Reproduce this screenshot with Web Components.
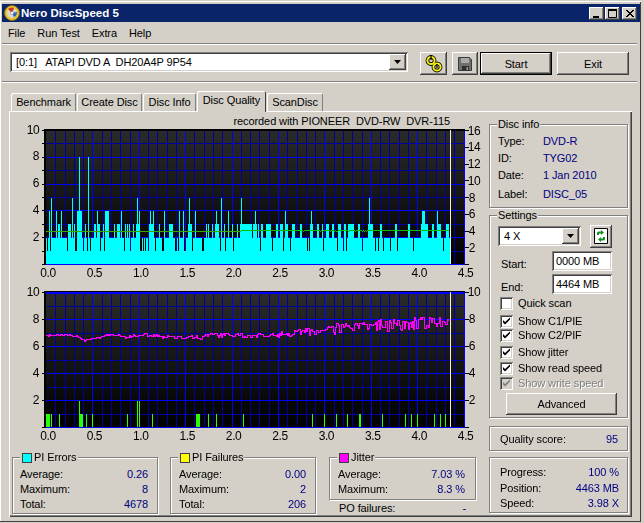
<!DOCTYPE html>
<html><head><meta charset="utf-8"><title>Nero DiscSpeed 5</title>
<style>
html,body{margin:0;padding:0;background:#d4d0c8;overflow:hidden;font:11px "Liberation Sans",Arial,sans-serif;letter-spacing:-.1px;color:#000}
</style></head><body>
<nd-window>
  <nd-titlebar text="Nero DiscSpeed 5"></nd-titlebar>
  <nd-menu><span>File</span><span>Run Test</span><span>Extra</span><span>Help</span></nd-menu>
  <nd-sep></nd-sep>
  <nd-toolbar>
    <nd-combo style="width:398px;height:20px" text="[0:1]   ATAPI DVD A  DH20A4P 9P54"></nd-combo>
    <nd-btn style="width:27px;height:23px;margin-left:12px"><svg width="20" height="20" viewBox="0 0 20 20"><g fill="none"><circle cx="7" cy="6.5" r="3.6" stroke="#000" stroke-width="3.6"/><circle cx="13" cy="13" r="3.6" stroke="#000" stroke-width="3.6"/><circle cx="7" cy="6.5" r="3.6" stroke="#f6ee10" stroke-width="2"/><circle cx="13" cy="13" r="3.6" stroke="#f6ee10" stroke-width="2"/></g><path d="M7 1v5M13 10v4" stroke="#000" stroke-width="1.2"/></svg></nd-btn>
    <nd-btn style="width:26px;height:23px;margin-left:5px"><svg width="14" height="14" viewBox="0 0 14 14"><path d="M.5.5h11l2 2v11H.5z" fill="#6f6f6f" stroke="#3c3c3c"/><path d="M3 1h8v5H3z" fill="#a8a8a8"/><path d="M4 9h7v4.5H4z" fill="#2e2e2e"/><path d="M8.500 10h1.500v3H8.500z" fill="#9a9a9a"/></svg></nd-btn>
    <nd-btn def style="width:72px;height:23px;margin-left:2px">Start</nd-btn>
    <nd-btn style="width:72px;height:23px;margin-left:5px">Exit</nd-btn>
  </nd-toolbar>
  <nd-sep></nd-sep>
  <nd-tabs><nd-tab style="width:65px">Benchmark</nd-tab><nd-tab style="width:65px">Create Disc</nd-tab><nd-tab style="width:53px">Disc Info</nd-tab><nd-tab active style="width:69px">Disc Quality</nd-tab><nd-tab style="width:56px">ScanDisc</nd-tab></nd-tabs>
  <nd-panel>
    <nd-main>
      <nd-chart-title>recorded with PIONEER  DVD-RW  DVR-115</nd-chart-title>
      <nd-chart kind="top"></nd-chart>
      <nd-chart kind="bottom"></nd-chart>
      <nd-stats>
        <nd-group legend="PI Errors" swatch="#00ffff" style="width:146px;height:57px;box-sizing:border-box;padding:9px 9px 0 7px">
          <nd-row label="Average:" value="0.26"></nd-row><nd-row label="Maximum:" value="8"></nd-row><nd-row label="Total:" value="4678"></nd-row>
        </nd-group>
        <nd-group legend="PI Failures" swatch="#ffff00" style="width:146px;height:57px;box-sizing:border-box;padding:9px 9px 0 8px;margin-left:12px">
          <nd-row label="Average:" value="0.00"></nd-row><nd-row label="Maximum:" value="2"></nd-row><nd-row label="Total:" value="206"></nd-row>
        </nd-group>
        <nd-po style="margin-left:13px">
          <nd-group legend="Jitter" swatch="#ff00ff" style="width:147px;height:43px;box-sizing:border-box;padding:9px 10px 0 8px">
            <nd-row label="Average:" value="7.03 %"></nd-row><nd-row label="Maximum:" value="8.3 %"></nd-row>
          </nd-group>
          <nd-row style="margin:1px 10px 0 10px" label="PO failures:" value="-"></nd-row>
        </nd-po>
      </nd-stats>
    </nd-main>
    <nd-side>
      <nd-group legend="Disc info" style="height:84px;box-sizing:border-box;padding:8px 8px 0 8px">
        <nd-info label="Type:" value="DVD-R"></nd-info>
        <nd-info label="ID:" value="TYG02"></nd-info>
        <nd-info label="Date:" value="1 Jan 2010"></nd-info>
        <nd-info style="margin-top:2px" label="Label:" value="DISC_05"></nd-info>
      </nd-group>
      <nd-group legend="Settings" style="height:203px;box-sizing:border-box;padding:10px 8px 0 8px;margin-top:7px">
        <nd-speed></nd-speed>
        <nd-range label="Start:" value="0000 MB" style="margin-top:5px"></nd-range>
        <nd-range label="End:" value="4464 MB" style="margin-top:3px"></nd-range>
        <nd-check style="margin-top:2px">Quick scan</nd-check>
        <nd-check checked style="margin-top:4px">Show C1/PIE</nd-check>
        <nd-check checked>Show C2/PIF</nd-check>
        <nd-check checked style="margin-top:3px">Show jitter</nd-check>
        <nd-check checked style="margin-top:2px">Show read speed</nd-check>
        <nd-check checked disabled style="margin-top:1px">Show write speed</nd-check>
        <nd-btn style="display:flex;width:111px;height:22px;margin:3px 0 0 8px">Advanced</nd-btn>
      </nd-group>
      <nd-group style="height:25px;box-sizing:border-box;padding:5px 9px 0 10px;margin-top:8px">
        <nd-row label="Quality score:" value="95"></nd-row>
      </nd-group>
      <nd-group style="height:56px;box-sizing:border-box;padding:7px 8px 0 10px;margin-top:6px">
        <nd-row tall label="Progress:" value="100 %"></nd-row>
        <nd-row tall label="Position:" value="4463 MB"></nd-row>
        <nd-row tall label="Speed:" value="3.98 X"></nd-row>
      </nd-group>
    </nd-side>
  </nd-panel>
</nd-window>
<script>
const RAISED='box-shadow:inset -1px -1px #404040,inset 1px 1px #fff,inset -2px -2px #808080,inset 2px 2px #d4d0c8;';
const SUNKEN='box-shadow:inset 1px 1px #808080,inset -1px -1px #fff,inset 2px 2px #404040,inset -2px -2px #d4d0c8;';
function def(name,css,html,init){
  customElements.define(name,class extends HTMLElement{
    connectedCallback(){
      if(this.shadowRoot)return;
      const r=this.attachShadow({mode:'open'});
      const a=n=>this.getAttribute(n)||'';
      r.innerHTML='<style>'+css+'</style>'+(typeof html==='function'?html(a,this):html);
      if(init)init(r,this);
    }
  });
}
def('nd-window',':host{display:flex;flex-direction:column;width:641px;height:522px;box-sizing:border-box;padding:4px 1px 0 2px;box-shadow:inset 0 1px #d4d0c8,inset 0 2px #fff,inset -1px -1px #404040,inset 1px 0 #fff}','<slot></slot>');
def('nd-titlebar',':host{display:flex;align-items:center;height:18px;background:#0a246a;color:#fff;font-weight:bold;font-size:11.500px;letter-spacing:0;flex:none}.t{margin-left:1px;flex:1}.b{display:flex;margin-right:3px}.w{width:15px;height:13px;background:#d4d0c8;margin-left:1px;'+RAISED+'display:flex}.w svg{display:block}',
 a=>`<svg style="margin-left:2px" width="16" height="16" viewBox="0 0 16 16"><circle cx="8" cy="8" r="7.500" fill="#e8c430" stroke="#8a6a10"/><circle cx="8" cy="8" r="5" fill="#d9d9d0"/><path d="M8 8L4 4A5.600 5.600 0 0 1 10 3z" fill="#d03020"/><path d="M8 8l5-1a5 5 0 0 1-3 5z" fill="#3060c0"/><circle cx="8" cy="8" r="1.600" fill="#fff" stroke="#777" stroke-width=".5"/></svg><span class="t">${a('text')}</span><span class="b"><span class="w"><svg width="15" height="13"><path d="M4 9h6v2H4z"/></svg></span><span class="w" style="margin-left:1px"><svg width="15" height="13"><path d="M3.500 2.500h8v8h-8z" fill="none" stroke="#000"/><path d="M3 2h9v2H3z"/></svg></span><span class="w" style="margin-left:2px"><svg width="15" height="13"><path d="M4 3l7 7M5 3l7 7M11 3l-7 7M12 3l-7 7" stroke="#000" stroke-width="1" fill="none"/></svg></span></span>`);
def('nd-menu',':host{display:flex;align-items:center;gap:12px;height:21px;padding-left:6px;flex:none}','<slot></slot>');
def('nd-sep',':host{display:block;height:1px;border-bottom:1px solid #fff;background:#808080;flex:none;margin-right:3px}','');
def('nd-toolbar',':host{display:flex;height:29px;padding:7px 0 0 8px;flex:none;box-sizing:content-box;align-items:flex-start}','<slot></slot>');
def('nd-combo',':host{display:flex;box-sizing:border-box;background:#fff;'+SUNKEN+'padding:2px;align-items:stretch}.t{flex:1;white-space:pre;padding-left:4px;line-height:16px}.a{width:17px;background:#d4d0c8;'+RAISED+'display:flex;align-items:center;justify-content:center}',
 a=>`<span class="t">${a('text')}</span><span class="a"><svg width="8" height="5"><path d="M0 0h7L3.500 4z"/></svg></span>`);
def('nd-btn',':host{display:inline-flex;align-items:center;justify-content:center;box-sizing:border-box;background:#d4d0c8;'+RAISED+'flex:none}:host([def]){box-shadow:inset 0 0 0 1px #000,inset -2px -2px #404040,inset 2px 2px #fff,inset -3px -3px #808080}','<slot></slot>');
def('nd-tabs',':host{display:flex;align-items:flex-end;height:20px;margin:8px 0 0 9px;flex:none;position:relative;z-index:1}','<slot></slot>');
def('nd-tab',':host{display:flex;align-items:center;justify-content:center;box-sizing:border-box;height:18px;margin-right:1px;background:#d4d0c8;box-shadow:inset 1px 1px #fff,inset -1px 0 #808080;border-radius:2px 2px 0 0}:host([active]){height:21px;margin-bottom:-1px;padding-bottom:3px;box-shadow:inset 1px 1px #fff,inset -1px 0 #404040}','<slot></slot>');
def('nd-panel',':host{display:flex;width:623px;height:406px;margin-left:7px;box-shadow:inset 1px 1px #fff,inset -1px -1px #404040,inset -2px -2px #808080;flex:none}','<slot></slot>');
def('nd-main',':host{display:block;width:480px;flex:none}','<slot></slot>');
def('nd-side',':host{display:block;width:139px;padding-top:13px;flex:none}','<slot></slot>');
def('nd-chart-title',':host{display:block;height:18px;line-height:20px;text-align:right;padding-right:39px;white-space:pre;box-sizing:border-box}','<slot></slot>');
def('nd-stats',':host{display:flex;margin:12px 0 0 3px}','<slot></slot>');
def('nd-po',':host{display:block;flex:none}','<slot></slot>');
def('nd-group',':host{display:block;position:relative;border:1px solid #808080;box-shadow:1px 1px #fff,inset 1px 1px #fff;}.l{position:absolute;top:-7px;left:7px;background:#d4d0c8;padding:0 1px;display:flex;align-items:center;line-height:13px;white-space:nowrap}.s{width:8px;height:8px;border:1px solid #404040;margin-right:2px;margin-left:1px}',
 (a,h)=>(a('legend')?`<span class="l">${a('swatch')?`<i class="s" style="background:${a('swatch')}"></i>`:''}${a('legend')}</span>`:'')+'<slot></slot>');
def('nd-row',':host{display:flex;justify-content:space-between;height:15px;line-height:15px;white-space:nowrap}:host([tall]){height:15.500px}b{font-weight:normal;color:#000080}',
 a=>`<span>${a('label')}</span><b>${a('value')}</b>`);
def('nd-info',':host{display:flex;height:17px;line-height:17px}span{width:45px;flex:none}b{font-weight:normal;color:#000080}',
 a=>`<span>${a('label')}</span><b>${a('value')}</b>`);
def('nd-speed',':host{display:flex;align-items:center;height:20px}.r{width:22px;height:23px;margin-left:9px;background:#d4d0c8;'+RAISED+'display:flex;align-items:center;justify-content:center}',
 `<nd-combo style="width:83px;height:20px" text="4 X"></nd-combo><span class="r"><svg width="14" height="16" viewBox="0 0 14 16"><path d="M.5.500h13v15H.5z" fill="#fff" stroke="#000"/><path d="M3 7V5q0-1.500 2-1.500h2V2l3 2.500L7 7V5.500H5V7zM11 9v2q0 1.500-2 1.500H7V14l-3-2.500L7 9v1.500h2V9z" fill="#109020"/></svg></span>`);
def('nd-range',':host{display:flex;height:20px}span{width:51px;padding:3px 0 0 3px;line-height:20px}i{font-style:normal;width:60px;height:20px;box-sizing:border-box;background:#fff;'+SUNKEN+'padding-left:4px;line-height:20px}',
 a=>`<span>${a('label')}</span><i>${a('value')}</i>`);
def('nd-check',':host{display:flex;align-items:center;height:14px;margin-left:2px;white-space:nowrap}i{width:13px;height:13px;box-sizing:border-box;background:#fff;'+SUNKEN+'margin-right:5px;display:flex;align-items:center;justify-content:center}:host([disabled]) i{background:#d4d0c8}:host([disabled]) span{color:#808080;text-shadow:1px 1px #fff}:host([disabled]) path{fill:#808080}',
 (a,h)=>`<i>${h.hasAttribute('checked')?'<svg width="9" height="9"><path d="M1 3l2 2 5-4.500v2L3 7.500 1 5.500z"/></svg>':''}</i><span><slot></slot></span>`);
def('nd-chart',':host{display:block;position:relative;font-size:12px}canvas{display:block}span{position:absolute;line-height:12px;transform:translate(-50%,-50%);letter-spacing:-.4px}',
 (a,h)=>{
  const top=a('kind')==='top',Y0=top?129:291,H=top?162:154;
  let s=`<canvas width="480" height="${H}"></canvas>`;
  const lab=(x,y,t)=>`<span style="left:${x-9}px;top:${y-Y0}px">${t}</span>`;
  const zero=top?264.5:427.5,u=top?13.4:13.5;
  for(let v=2;v<=10;v+=2)s+=lab(v==10?33:36,zero-u*v-1,v);
  for(let i=0;i<=9;i++)s+=lab(48+46.4*i,zero+8,(i/2).toFixed(1));
  if(top)for(let v=2;v<=16;v+=2)s+=lab(v>=10?474:472,zero-8.375*v,v);
  else for(let v=2;v<=10;v+=2)s+=lab(v==10?474:472,zero-u*v-1,v);
  return s;
 },(r,h)=>drawChart(r.querySelector('canvas'),h.getAttribute('kind')==='top'));

function rng(a){return()=>{a=(a+0x6D2B79F5)|0;let t=Math.imul(a^(a>>>15),1|a);t=(t+Math.imul(t^(t>>>7),61|t))^t;return((t^(t>>>14))>>>0)/4294967296}}
function drawChart(c,top){
  const g=c.getContext('2d'),Y0=top?129:291;
  g.translate(-9,-Y0);
  const zero=top?264.5:427.5,u=top?13.4:13.5,y10=zero-u*10,L=46,R=465;
  const T=Math.floor(y10),B=Math.floor(zero);
  g.fillStyle='#000';g.fillRect(L-2,T-1,R-L+2,B-T+2);
  const gr=g.createLinearGradient(0,T,0,B);gr.addColorStop(0,'#2b2b2b');gr.addColorStop(1,'#000');
  g.fillStyle=gr;g.fillRect(L,T,R-L,B-T);
  g.fillStyle='#0000a0';
  for(let i=1;i<=45;i++){g.fillRect(Math.round(L+9.28*i),T,1,B-T)}
  for(let v=1;v<10;v+=2)g.fillRect(L,Math.floor(zero-u*v),R-L,1);
  g.fillStyle='#0000ff';
  for(let i=5;i<=45;i+=5)g.fillRect(Math.round(L+9.28*i),T,1,B-T);
  for(let v=0;v<=10;v+=2)g.fillRect(L,Math.floor(zero-u*v),R-L,1);
  if(!top)g.fillRect(L-1,T,R-L+1,2);else{g.fillStyle='#000';g.fillRect(L-2,T-1,R-L+2,2)}
  g.fillStyle='#000';
  for(let v=0;v<=10;v+=(top?1:2))g.fillRect(L-4,Math.floor(zero-u*v),4,1);
  g.fillRect(L-2,T-1,2,B-T+2);
  if(top)for(let v=0;v<=16;v+=2)g.fillRect(R,Math.floor(zero-8.375*v),4,1);
  else for(let v=0;v<=10;v+=2)g.fillRect(R,Math.floor(zero-u*v),4,1);
  const lvl=new Array(480).fill(0);
  if(top){
    const set=(arr,val)=>arr.forEach(x=>{if(Array.isArray(x)){for(let i=x[0];i<=x[1];i++)lvl[i]=val}else lvl[x]=val});
    for(let x=46;x<450;x++)lvl[x]=2;
    const z=t=>Math.round(240+t/3);
    set([47,50,59,67,75,76,83,87,90,95,100,104,108,124,130,140,141,143,145,148,155,162,163,164,175,176,178,183,184,185,192,202,203,212,220,225,233,240],1);
    set([8,20,30,40,60,78,95,110,130,150,200,208,235,250,265,290,310,318,340,365,405,415,430,450,470,505,518,610,622].map(z),1);
    set([[58,59],[68,69],[70,70],[74,74],[78,81],[85,85],[94,95],[98,99],[103,103],[114,114],[117,119],[125,125],[127,127],[129,129],[133,133],[136,139],[149,153],[159,159],[169,172],[188,191],[206,206],[208,208],[212,212],[215,218],[224,224],[232,232],[237,237],[243,248],[253,254],[258,258],[261,262],[266,266]],3);
    [[0,22],[28,32],[45,48],[80,90],[108,110],[120,125],[135,140],[155,162],[180,183],[210,215],[232,234],[245,247],[258,265],[275,280],[295,300],[312,315],[325,340],[355,358],[385,395],[420,422],[465,467],[505,508],[543,560],[575,578],[590,600],[618,625],[630,633]].forEach(p=>{for(let i=z(p[0]);i<=z(p[1]);i++)lvl[i]=3});
    set([49,56,61,[77,81],97,[105,107],108,121,139,150,153,164,179,183,195,216,228,z(45),z(135),z(213),[z(547),z(553)],z(590),z(630)],4);
    set([51,72,137,189,221,241,z(3),z(388)],5);
    set([79,88],8);
    g.fillStyle='#00ffff';
    for(let x=46;x<451;x++){if(lvl[x]){const ty=Math.round(zero-u*lvl[x]);g.fillRect(x,ty,1,B-ty)}}
    g.fillStyle='#f0f0e0';g.fillRect(450,T,1,B-T);
    const n=rng(7);
    for(let x=46;x<449;x++){
      const y=231-(x>240?1:0)+(x>300&&x<370&&n()>.8?1:0);
      g.fillStyle=x<240?'#38a800':'#00c000';
      g.fillRect(x,y,1,1);
    }
  }else{
    const bars=[[46,49,1],[51,51,1],[59,59,1],[79,82,1],[79,79,2],[86,86,1],[92,92,1],[127,127,1],[137,137,2],[139,139,2],[152,152,1],[196,198,1],[199,199,1],[208,208,1],[216,216,1],[243,243,1],[312,312,1],[324,324,1],[336,336,1],[347,347,1],[359,360,1],[382,382,1],[405,405,1],[411,411,1],[417,417,1],[434,434,1],[440,440,1],[445,445,1]];
    g.fillStyle='#28ff00';
    bars.forEach(b=>{const ty=Math.round(zero-u*b[2]);g.fillRect(b[0],ty,b[1]-b[0]+1,B-ty)});
    g.fillStyle='#f0f0e0';g.fillRect(450,T,1,B-T);
    const pts=[[46,335],[63,334.300],[73,335],[85,340],[100,336.700],[112,334],[125,336.700],[145,334],[165,336.700],[180,337],[200,336.700],[215,334.300],[250,335.700],[280,335],[300,332.300],[320,331],[340,328.300],[360,326.700],[380,325],[400,324],[420,323.300],[449,322.700]];
    const base=x=>{for(let i=1;i<pts.length;i++)if(x<=pts[i][0]){const a=pts[i-1],b=pts[i];return a[1]+(b[1]-a[1])*(x-a[0])/(b[0]-a[0])}return 322.7};
    const amp=x=>x<130?1:x<200?1.6:x<280?2.4:x<330?4:x<380?5.5:6.5;
    const n=rng(11);let prev=base(46),d=0,hold=0;
    g.fillStyle='#ff00ff';
    for(let x=46;x<449;x++){
      if(hold--<=0){d=(n()-.5)*2*amp(x);hold=n()>.6?1:0}
      let y=Math.round(base(x)+d);
      const a=Math.min(prev,y),b=Math.max(prev,y);
      g.fillRect(x,a,1,b-a+1);
      prev=y;
    }
  }
}
</script>
</body></html>
